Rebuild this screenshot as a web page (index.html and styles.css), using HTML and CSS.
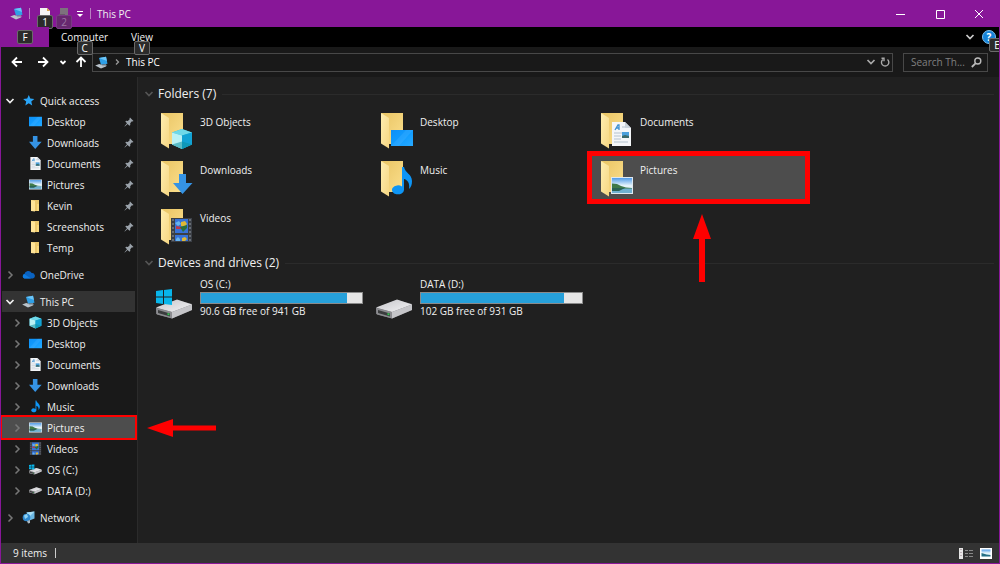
FILE: index.html
```html
<!DOCTYPE html>
<html lang="en">
<head>
  <meta charset="UTF-8" />
  <meta name="viewport" content="width=device-width, initial-scale=1.0"/>
  <title>This PC</title>
  <link rel="stylesheet" href="styles.css">
</head>
<body>
  <!-- Shared icons -->
  <svg class="sprite" aria-hidden="true">
    <defs>
      <linearGradient id="g-back" x1="0" y1="0" x2="1" y2="1">
        <stop offset="0" stop-color="#e9c463"/><stop offset="1" stop-color="#fbdf8d"/>
      </linearGradient>
      <linearGradient id="g-front" x1="0" y1="0" x2="1" y2="1">
        <stop offset="0" stop-color="#ffeeb0"/><stop offset="1" stop-color="#f6d682"/>
      </linearGradient>
      <linearGradient id="g-sky" x1="0" y1="0" x2="0" y2="1">
        <stop offset="0" stop-color="#4f9be8"/><stop offset="0.5" stop-color="#e4f3fb"/>
      </linearGradient>
      <linearGradient id="g-screen" x1="0" y1="0" x2="1" y2="1">
        <stop offset="0" stop-color="#0f8ff5"/><stop offset="0.5" stop-color="#109cff"/><stop offset="1" stop-color="#28aaff"/>
      </linearGradient>
      <linearGradient id="g-drive" x1="0" y1="0" x2="1" y2="1">
        <stop offset="0" stop-color="#c4c4c8"/><stop offset="1" stop-color="#f4f4f6"/>
      </linearGradient>
    </defs>
    <symbol id="right" viewBox="0 0 10 10"><path d="M3.500 1.500L7 5 3.500 8.500" fill="none" stroke="#777" stroke-width="1.500"/></symbol>
    <symbol id="down" viewBox="0 0 10 10"><path d="M1.500 3l3.500 3.500 3.500-3.500" fill="none" stroke="currentColor" stroke-width="1.700"/></symbol>
    <symbol id="pin" viewBox="0 0 10 10"><path d="M6 .5l3.500 3.500-1 .5-.6-.2-1.700 1.900.1 1.800-.9.700L3.600 6.900.8 9.400.5 9.200 3 6.300 1.300 4.600l.8-.8 1.700.1 1.900-1.700-.2-.7z" fill="#9aa2aa"/></symbol>
    <symbol id="star" viewBox="0 0 13 13"><path d="M6.800 1l1.500 3.600 4 .3-3 2.600.9 3.900-3.500-2.100L3.300 11.500l.9-4-3.100-2.600 4.100-.3z" fill="#2aa5f7"/></symbol>
    <symbol id="cloud" viewBox="0 0 13 13"><path d="M2.500 10.500A2.400 2.400 0 0 1 2.400 5.900 4 4 0 0 1 9.700 4.900 2.900 2.900 0 0 1 11 10.500z" fill="#0a62c0"/><path d="M2.500 10.500A2.400 2.400 0 0 1 2.200 6L9 10.500z" fill="#0e7be0"/></symbol>
    <symbol id="pc" viewBox="0 0 13 13"><path d="M4 2L11 .8l1.500 7L6 8.800z" fill="#2f9fe6"/><path d="M4 2L11 .8 12 5z" fill="#6cc6f9"/><path d="M.2 9.500l4-1.500L11.500 10.300 6 12.500z" fill="#b9c3cb"/><path d="M6 8.800l5-.6.8 1.600-4 .4z" fill="#8fa0ad"/></symbol>
    <symbol id="cube" viewBox="0 0 22 22"><path d="M11 1l10 3.500v12L11 21 1 16.500v-12z" fill="#20b4d4"/><path d="M11 1l10 3.500L11 7.500 1 4.500z" fill="#6fd8e8"/><path d="M1 4.500l10 3V21L1 16.500z" fill="#b9f1f5"/><path d="M11 7.500l10-3v12L11 21z" fill="#12a2d4"/><path d="M11 13.500l10 3L11 21 1 16.500z" fill="#0c8fa0" fill-opacity=".55"/></symbol>
    <symbol id="desktop" viewBox="0 0 22 16"><path d="M0 0h22v16H0z" fill="url(#g-screen)"/><path d="M0 16L15 0h7L8 16z" fill="#fff" fill-opacity=".08"/></symbol>
    <symbol id="arrow" viewBox="0 0 20 20"><path d="M6 0h7v9h6.500L9.500 20 0 9h6z" fill="#3593e4"/></symbol>
    <symbol id="doc" viewBox="0 0 19 24"><path d="M0 0h13l6 6v18H0z" fill="#f4f6f8"/><path d="M13 0v6h6z" fill="#c9d2da"/><path d="M3 8L6 3h1v5M4 6h3" fill="none" stroke="#3b8fd0" stroke-width="1.300"/><path d="M10 5h3M2 11h14M2 14h7M2 17h7M2 20h14" stroke="#b4c2ce"/><path d="M10 10h7v6h-7z" fill="#4aa0dc"/><path d="M10 14l3-1 4 1v2h-7z" fill="#3a6a6a"/></symbol>
    <symbol id="picture" viewBox="0 0 22 17"><path d="M0 0h22v17H0z" fill="#dfe9f0"/><path d="M1 1h20v15H1z" fill="url(#g-sky)"/><path d="M1 6.500l5 .5 4 2 5 1.500 6 .5v1H1z" fill="#3f7a4a"/><path d="M1 11.500h20V16H1z" fill="#6fb0d0"/><path d="M1 11h13l-6 3H1z" fill="#2a6355"/></symbol>
    <symbol id="note" viewBox="0 0 20 30"><path d="M10 1h2c1 6 8 7 8 14 0 4-1 6-3 8 1-7-2-9-5-10v11a6 4.500 0 1 1-2-3.500z" fill="#0e95f5"/></symbol>
    <symbol id="film" viewBox="0 0 21 24"><path d="M0 0h21v24H0z" fill="#3b3f46"/><path d="M4 1h13v14H4zM4 17h13v6H4z" fill="#3773d9"/><path d="M4 5l4-2 2 3-3 2zM5 21l2-2 2 2v2H5z" fill="#67b4ec"/><path d="M10 4l4-1 2 3-3 3-3-1zM11 20l3-1 2 2-2 2h-3z" fill="#e0b936"/><path d="M5 8l6 1-1 2H5z" fill="#b9384c"/><path d="M9 9l7-2v3l-4 4z" fill="#2c6e3b"/><path d="M2 1v23M19 1v23" stroke="#777d85" stroke-width="1.500" stroke-dasharray="2 2"/></symbol>
    <symbol id="smallfolder" viewBox="0 0 13 13"><path d="M2 1h8v11H2z" fill="#ebc76c"/><path d="M2 1l4 1v10.500L2 12z" fill="#ffe498"/><path d="M8 5h2v7H8z" fill="#f9d97e"/></symbol>
    <symbol id="folder" viewBox="0 0 24 36"><path d="M1 0h22v31H9z" fill="url(#g-back)"/><path d="M1 0l8 5v30.500L1 30.500z" fill="url(#g-front)"/></symbol>
    <symbol id="drive" viewBox="0 0 37 20"><path d="M0 9L21 1l15 4v6L16 19.500 0 15z" fill="#77777b"/><path d="M0 8.500L21 .5l15 5L16 13z" fill="url(#g-drive)"/><path d="M0 9l16 4v6.500L1 15.500z" fill="#8c8c90"/><path d="M2 11l12 3.500v3L2 14z" fill="#3b3d3e"/><path d="M16 13l20-7.500v5.500L16 19.500z" fill="#c5c5c9"/><path d="M11.500 14l2 .5v2l-2-.5z" fill="#35c454"/></symbol>
    <symbol id="winlogo" viewBox="0 0 16 16"><path d="M0 2l7-1v6.500H0zM8 .9L16 0v7.500H8zM0 8.500h7V15l-7-1zM8 8.500h8V16l-8-1z" fill="#08b5ea"/></symbol>
    <symbol id="osdrive" viewBox="0 0 37 30"><use href="#drive" x="0" y="10" width="37" height="20"/><use href="#winlogo" x="0" y="0" width="16" height="16"/></symbol>
    <symbol id="network" viewBox="0 0 13 13"><path d="M4.500 1.500L12.500.5v7l-5 2z" fill="#6db9e4"/><path d="M4.500 1.500L12.500.5 8 5z" fill="#a9def5"/><circle cx="4.500" cy="6.500" r="3.800" fill="#2d88cf"/><path d="M2 4.500l3-1.500 1 3-3 2z" fill="#8ed2f2"/><path d="M5 10l3-1v3l-2 .5z" fill="#a8b7c2"/></symbol>
  </svg>

  <div class="window">
    <!-- Title bar -->
    <header class="titlebar">
      <svg class="icon"><use href="#pc"/></svg>
      <span class="divider"></span>
      <button class="quick" aria-label="Properties">
        <svg viewBox="0 0 10 12"><path d="M0 0h7l3 3v9H0z" fill="#f4f4f4"/><path d="M7 0v3h3z" fill="#d9a648"/></svg>
        <kbd class="keytip">1</kbd>
      </button>
      <button class="quick" aria-label="New folder">
        <svg viewBox="0 0 10 12"><path d="M1 0h8v9H1z" fill="#7d727d"/><path d="M0 6h6v6H0z" fill="#69586b"/></svg>
        <kbd class="keytip faded">2</kbd>
      </button>
      <button class="customize" aria-label="Customize toolbar"><svg viewBox="0 0 8 8"><path d="M1 1.500h6" stroke="#fff"/><path d="M1 4h6L4 7z" fill="#fff"/></svg></button>
      <span class="divider"></span>
      <h1>This PC</h1>
      <div class="controls">
        <button aria-label="Minimize"><svg viewBox="0 0 10 10"><path d="M0 5.500h9"/></svg></button>
        <button aria-label="Maximize"><svg viewBox="0 0 10 10"><path d="M1.500 1.500h8v8h-8z"/></svg></button>
        <button aria-label="Close"><svg viewBox="0 0 10 10"><path d="M1 1l8 8M9 1L1 9"/></svg></button>
      </div>
    </header>

    <!-- Ribbon tabs -->
    <nav class="ribbon">
      <button class="tab file" aria-label="File"><kbd class="keytip">F</kbd></button>
      <button class="tab">Computer<kbd class="keytip">C</kbd></button>
      <button class="tab">View<kbd class="keytip">V</kbd></button>
      <div class="ribbon-end">
        <button aria-label="Expand the ribbon"><svg class="chevron"><use href="#down"/></svg></button>
        <button class="help" aria-label="Help">?<kbd class="keytip">E</kbd></button>
      </div>
    </nav>

    <!-- Address bar -->
    <div class="toolbar">
      <div class="history">
        <button aria-label="Back"><svg viewBox="0 0 12 12"><path d="M6 1.500L1.500 6 6 10.500M1.500 6H11"/></svg></button>
        <button aria-label="Forward"><svg viewBox="0 0 12 12"><path d="M6 1.500L10.500 6 6 10.500M10.500 6H1"/></svg></button>
        <button class="recent" aria-label="Recent locations"><svg viewBox="0 0 12 12"><path d="M3.500 5L6 7.500 8.500 5"/></svg></button>
        <button class="up" aria-label="Up"><svg viewBox="0 0 12 12"><path d="M1.500 6L6 1.500 10.500 6M6 1.500V11"/></svg></button>
      </div>
      <div class="address">
        <svg class="icon"><use href="#pc"/></svg>
        <svg class="chevron" viewBox="0 0 10 10"><path d="M4 2.500L6.500 5 4 7.500" fill="none" stroke="#999" stroke-width="1.300"/></svg>
        <a href="#">This PC</a>
        <button aria-label="Previous locations"><svg class="chevron"><use href="#down"/></svg></button>
        <button aria-label="Refresh"><svg class="chevron" viewBox="0 0 10 10"><path d="M7.500 2.500A3.700 3.700 0 1 1 2.800 2.500M1.500 1.300h2.500v3" fill="none" stroke="currentColor" stroke-width="1.400"/></svg></button>
      </div>
      <div class="search">
        <input type="text" placeholder="Search Th..." aria-label="Search This PC">
        <svg viewBox="0 0 11 11"><circle cx="6.800" cy="4" r="3" fill="none" stroke="#bbb" stroke-width="1.400"/><path d="M4.500 6.300L.8 10" stroke="#bbb" stroke-width="1.800"/></svg>
      </div>
    </div>

    <div class="main">
      <!-- Navigation pane -->
      <nav class="tree">
        <ul>
          <li><a class="row root" href="#"><svg class="chevron"><use href="#down"/></svg><svg class="icon"><use href="#star"/></svg>Quick access</a></li>
          <li><a class="row pinned" href="#"><svg class="icon"><use href="#desktop"/></svg>Desktop<svg class="pin"><use href="#pin"/></svg></a></li>
          <li><a class="row pinned" href="#"><svg class="icon"><use href="#arrow"/></svg>Downloads<svg class="pin"><use href="#pin"/></svg></a></li>
          <li><a class="row pinned" href="#"><svg class="icon"><use href="#doc"/></svg>Documents<svg class="pin"><use href="#pin"/></svg></a></li>
          <li><a class="row pinned" href="#"><svg class="icon"><use href="#picture"/></svg>Pictures<svg class="pin"><use href="#pin"/></svg></a></li>
          <li><a class="row pinned" href="#"><svg class="icon"><use href="#smallfolder"/></svg>Kevin<svg class="pin"><use href="#pin"/></svg></a></li>
          <li><a class="row pinned" href="#"><svg class="icon"><use href="#smallfolder"/></svg>Screenshots<svg class="pin"><use href="#pin"/></svg></a></li>
          <li><a class="row pinned" href="#"><svg class="icon"><use href="#smallfolder"/></svg>Temp<svg class="pin"><use href="#pin"/></svg></a></li>
        </ul>
        <ul>
          <li><a class="row root" href="#"><svg class="chevron"><use href="#right"/></svg><svg class="icon"><use href="#cloud"/></svg>OneDrive</a></li>
        </ul>
        <ul>
          <li><a class="row root current" href="#"><svg class="chevron"><use href="#down"/></svg><svg class="icon"><use href="#pc"/></svg>This PC</a></li>
          <li><a class="row" href="#"><svg class="chevron"><use href="#right"/></svg><svg class="icon"><use href="#cube"/></svg>3D Objects</a></li>
          <li><a class="row" href="#"><svg class="chevron"><use href="#right"/></svg><svg class="icon"><use href="#desktop"/></svg>Desktop</a></li>
          <li><a class="row" href="#"><svg class="chevron"><use href="#right"/></svg><svg class="icon"><use href="#doc"/></svg>Documents</a></li>
          <li><a class="row" href="#"><svg class="chevron"><use href="#right"/></svg><svg class="icon"><use href="#arrow"/></svg>Downloads</a></li>
          <li><a class="row" href="#"><svg class="chevron"><use href="#right"/></svg><svg class="icon"><use href="#note"/></svg>Music</a></li>
          <li class="callout-left">
            <a class="row marked" href="#"><svg class="chevron"><use href="#right"/></svg><svg class="icon"><use href="#picture"/></svg>Pictures</a>
            <svg class="pointer" viewBox="0 0 70 18"><path d="M0 9L26 0v6.500h43v5H26V18z" fill="#f00"/></svg>
          </li>
          <li><a class="row" href="#"><svg class="chevron"><use href="#right"/></svg><svg class="icon"><use href="#film"/></svg>Videos</a></li>
          <li><a class="row" href="#"><svg class="chevron"><use href="#right"/></svg><svg class="icon"><use href="#osdrive"/></svg>OS (C:)</a></li>
          <li><a class="row" href="#"><svg class="chevron"><use href="#right"/></svg><svg class="icon"><use href="#drive"/></svg>DATA (D:)</a></li>
        </ul>
        <ul>
          <li><a class="row root" href="#"><svg class="chevron"><use href="#right"/></svg><svg class="icon"><use href="#network"/></svg>Network</a></li>
        </ul>
      </nav>

      <!-- Folders and drives -->
      <main class="content">
        <section>
          <h2><svg class="chevron"><use href="#down"/></svg>Folders (7)</h2>
          <div class="tiles">
            <a class="tile" href="#"><svg viewBox="0 0 34 38"><use href="#folder" width="24" height="36"/><use href="#cube" x="11" y="15" width="22" height="22"/></svg>3D Objects</a>
            <a class="tile" href="#"><svg viewBox="0 0 34 38"><use href="#folder" width="24" height="36"/><use href="#desktop" x="11" y="17" width="22" height="16"/></svg>Desktop</a>
            <a class="tile" href="#"><svg viewBox="0 0 34 38"><use href="#folder" width="24" height="36"/><use href="#doc" x="12" y="9" width="19" height="24"/></svg>Documents</a>
            <a class="tile" href="#"><svg viewBox="0 0 34 38"><use href="#folder" width="24" height="36"/><use href="#arrow" x="13" y="13" width="20" height="20"/></svg>Downloads</a>
            <a class="tile" href="#"><svg viewBox="0 0 34 38"><use href="#folder" width="24" height="36"/><use href="#note" x="12" y="5" width="20" height="30"/></svg>Music</a>
            <a class="tile marked" href="#"><svg viewBox="0 0 34 38"><use href="#folder" width="24" height="36"/><use href="#picture" x="11" y="16" width="22" height="17"/></svg>Pictures
              <svg class="pointer" viewBox="0 0 18 68"><path d="M9 0l9 25h-6v43H6V25H0z" fill="#f00"/></svg>
            </a>
            <a class="tile" href="#"><svg viewBox="0 0 34 38"><use href="#folder" width="24" height="36"/><use href="#film" x="11" y="9" width="21" height="24"/></svg>Videos</a>
          </div>
        </section>
        <section>
          <h2><svg class="chevron"><use href="#down"/></svg>Devices and drives (2)</h2>
          <div class="tiles">
            <a class="drive" href="#">
              <svg><use href="#osdrive"/></svg>
              <div class="info">
                <span>OS (C:)</span>
                <div class="bar"><div class="used" style="width: 90.4%"></div></div>
                <span>90.6 GB free of 941 GB</span>
              </div>
            </a>
            <a class="drive" href="#">
              <svg viewBox="0 0 37 30"><use href="#drive" y="10" width="37" height="20"/></svg>
              <div class="info">
                <span>DATA (D:)</span>
                <div class="bar"><div class="used" style="width: 89%"></div></div>
                <span>102 GB free of 931 GB</span>
              </div>
            </a>
          </div>
        </section>
      </main>
    </div>

    <!-- Status bar -->
    <footer class="status">
      <span class="count">9 items</span>
      <div class="views">
        <button aria-label="Details view"><svg viewBox="0 0 14 11"><path d="M0 0h4v11H0z" fill="#e6e6e6"/><path d="M2 1v9" stroke="#967b88" stroke-dasharray="1 2"/><path d="M6 2.500h3M10 2.500h4M6 5.500h3M10 5.500h4M6 8.500h3M10 8.500h4" stroke="#888"/></svg></button>
        <button aria-label="Large icons view"><svg viewBox="0 0 12 11"><path d="M0 0h12v11H0z" fill="#fff"/><path d="M1.500 1.500h9v7h-9z" fill="url(#g-sky)"/><path d="M1.500 5l5 1.500 4 .5v1.500h-9z" fill="#246f86"/></svg></button>
      </div>
    </footer>
  </div>
</body>
</html>
```
FILE: styles.css
```css
* {
  box-sizing: border-box;
}

body {
  margin: 0;
  font-family: "Open Sans", "Noto Sans", sans-serif;
  font-size: 10px;
  line-height: 14px;
  color: #f0f0f0;
  background: #202020;
}

button {
  display: flex;
  align-items: center;
  justify-content: center;
  padding: 0;
  border: 0;
  background: none;
  color: inherit;
  font: inherit;
}

a {
  color: inherit;
  text-decoration: none;
}

ul {
  margin: 0;
  padding: 0;
  list-style: none;
}

svg {
  display: block;
  flex-shrink: 0;
}

.sprite {
  position: absolute;
  width: 0;
  height: 0;
}

.icon {
  width: 13px;
  height: 13px;
}

.chevron {
  width: 10px;
  height: 10px;
}

.window {
  display: flex;
  flex-direction: column;
  min-height: 100vh;
  border: 1px solid #881798;
  border-top: 0;
  overflow: hidden;
}

/* Title bar */
.titlebar {
  display: flex;
  align-items: center;
  height: 27px;
  padding-left: 9px;
  background: #881798;
}

.titlebar h1 {
  margin: 0 0 0 6px;
  font-size: 10px;
  font-weight: normal;
}

.divider {
  width: 1px;
  height: 11px;
  margin-left: 6px;
  background: #b77fc1;
}

.quick {
  position: relative;
  margin-left: 10px;
}

.quick + .quick {
  margin-left: 9px;
}

.quick svg {
  width: 10px;
  height: 12px;
}

.customize {
  margin-left: 7px;
}

.customize svg {
  width: 8px;
  height: 8px;
}

.controls {
  display: flex;
  margin-left: auto;
  padding-right: 1px;
}

.controls button {
  width: 39px;
  height: 27px;
}

.controls svg {
  width: 10px;
  height: 10px;
  fill: none;
  stroke: #fff;
}

/* Key tips sit over the buttons */
.keytip {
  position: absolute;
  top: 7px;
  left: -3px;
  width: 16px;
  height: 14px;
  border: 1px solid #6a6a6a;
  border-radius: 2px;
  background: #2b2b2b;
  color: #fff;
  font-family: inherit;
  font-size: 10px;
  line-height: 12px;
  text-align: center;
}

.keytip.faded {
  border-color: #7a3a85;
  background: #67286f;
  color: #9c78a2;
}

/* Ribbon */
.ribbon {
  display: flex;
  height: 20px;
  background: #000;
}

.tab {
  position: relative;
  margin-left: 12px;
}

.tab + .tab + .tab {
  margin-left: 23px;
}

.tab .keytip {
  top: 14px;
  left: 50%;
  margin-left: -8px;
}

.tab.file {
  width: 48px;
  margin-left: 0;
  background: #881798;
}

.tab.file .keytip {
  top: 3px;
}

.ribbon-end {
  display: flex;
  gap: 7px;
  margin-left: auto;
  padding-right: 3px;
  color: #ccc;
}

.help {
  position: relative;
  align-self: center;
  width: 14px;
  height: 14px;
  border: 1px solid #7cc0ee;
  border-radius: 50%;
  background: #1683d8;
  color: #fff;
  font-weight: bold;
}

.help .keytip {
  left: 6px;
  font-weight: normal;
}

/* Address bar */
.toolbar {
  display: flex;
  align-items: center;
  height: 30px;
  padding-right: 11px;
  background: #191919;
}

.history {
  display: flex;
  align-items: center;
  padding: 0 5px 0 10px;
}

.history svg {
  width: 12px;
  height: 12px;
  fill: none;
  stroke: #fff;
  stroke-width: 1.8;
}

.history button {
  margin-right: 14px;
}

.history .recent {
  margin: 0 6px 0 -6px;
}

.history .up {
  margin: 0;
}

.address {
  display: flex;
  flex: 1;
  align-items: center;
  gap: 4px;
  height: 19px;
  padding: 0 2px;
  border: 1px solid #484848;
  color: #aaa;
}

.address a {
  margin-right: auto;
  color: #fff;
}

.search {
  display: flex;
  align-items: center;
  width: 85px;
  height: 19px;
  margin-left: 10px;
  padding: 0 5px 0 7px;
  border: 1px solid #484848;
}

.search input {
  flex: 1;
  min-width: 0;
  padding: 0;
  border: 0;
  outline: 0;
  background: none;
  color: #fff;
  font: inherit;
}

.search input::placeholder {
  color: #808080;
}

.search svg {
  width: 11px;
  height: 11px;
}

/* Navigation pane */
.main {
  display: flex;
  flex: 1;
}

.tree {
  position: relative;
  width: 137px;
  padding: 13px 2px 0 1px;
  border-right: 1px solid #2b2b2b;
  background: #191919;
}

.tree ul {
  margin-bottom: 6px;
}

.row {
  display: flex;
  align-items: center;
  height: 21px;
  padding-left: 10px;
}

.row.root {
  padding-left: 3px;
}

.row.pinned {
  padding-left: 27px;
}

.row .icon {
  margin: 0 5px 0 7px;
}

.row.pinned .icon {
  margin-left: 0;
}

.row .pin {
  width: 10px;
  height: 10px;
  margin-left: auto;
  margin-right: 1px;
}

.row.current {
  background: #333;
}

.row.marked {
  background: #4d4d4d;
  outline: 2px solid #f00;
}

.callout-left {
  position: relative;
}

.callout-left .pointer {
  position: absolute;
  top: 2px;
  left: 145px;
  width: 70px;
  height: 18px;
}

/* Content */
.content {
  flex: 1;
  padding: 8px 5px 0 6px;
}

h2 {
  display: flex;
  align-items: center;
  gap: 4px;
  margin: 0;
  font-size: 12px;
  font-weight: normal;
  line-height: 18px;
}

h2 .chevron {
  color: #555;
}

h2::after {
  content: "";
  flex: 1;
  height: 1px;
  margin-left: 2px;
  background: #2b2b2b;
}

.tiles {
  display: grid;
  grid-template-columns: repeat(auto-fill, 213px);
  gap: 5px 7px;
  padding: 5px 8px 7px;
}

.tile {
  position: relative;
  display: flex;
  height: 43px;
  gap: 6px;
  padding: 5px 8px;
  line-height: 18px;
}

.tile > svg {
  width: 34px;
  height: 38px;
}

.tile.marked {
  background: #4d4d4d;
  outline: 5px solid #f00;
}

.tile .pointer {
  position: absolute;
  top: 58px;
  left: 101px;
  width: 18px;
  height: 68px;
}

.drive {
  display: flex;
  gap: 7px;
  padding-left: 4px;
}

.drive > svg {
  width: 37px;
  height: 30px;
  margin-top: 12px;
}

.info {
  flex: 1;
  padding-right: 2px;
}

.info span {
  display: block;
}

.bar {
  height: 12px;
  margin-top: 1px;
  border: 1px solid #8a8a8a;
  background: #e6e6e6;
}

.used {
  height: 100%;
  background: #26a0da;
}

/* Status bar */
.status {
  display: flex;
  align-items: center;
  justify-content: space-between;
  height: 20px;
  padding: 0 6px 0 12px;
  background: #333;
}

.count {
  padding-right: 8px;
  border-right: 1px solid #ccc;
  line-height: 10px;
}

.views {
  display: flex;
  gap: 6px;
}

.views svg {
  width: 14px;
  height: 11px;
}
```
